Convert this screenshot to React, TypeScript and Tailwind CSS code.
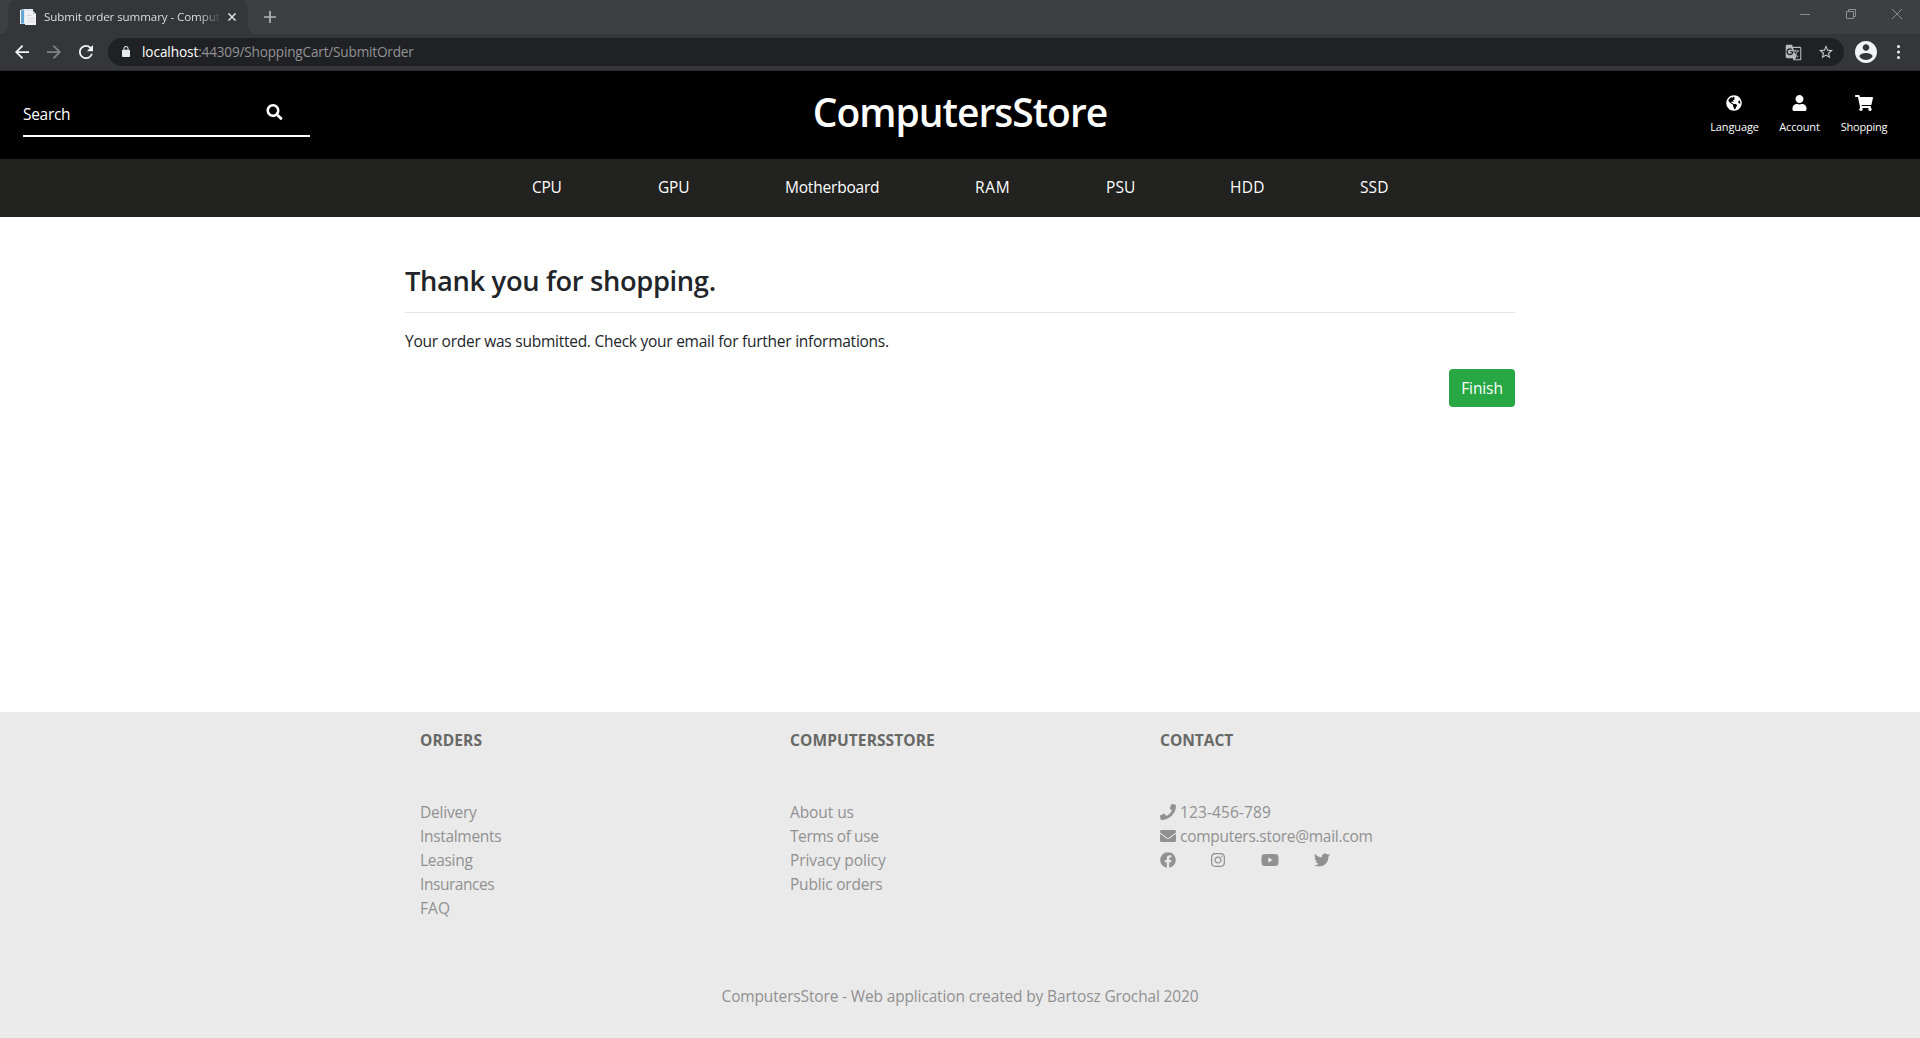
import React from "react";
import {
  FaEnvelope,
  FaFacebook,
  FaGlobeAmericas,
  FaInstagram,
  FaPhone,
  FaSearch,
  FaShoppingCart,
  FaTwitter,
  FaUser,
  FaYoutube,
} from "react-icons/fa";
import { MdGTranslate } from "react-icons/md";

type Item = { label: string; className: string };

const categories: Item[] = [
  { label: "CPU", className: "w-[29px] mr-[97px] tracking-[-0.3px]" },
  { label: "GPU", className: "w-[31px] mr-[96px] tracking-[-0.2px]" },
  { label: "Motherboard", className: "w-[94px] mr-[96px] tracking-[-0.2px]" },
  { label: "RAM", className: "w-[34px] mr-[97px] tracking-[0.7px]" },
  { label: "PSU", className: "w-[29px] mr-[95px] tracking-[0.1px]" },
  { label: "HDD", className: "w-[34px] mr-[96px] tracking-[0.3px]" },
  { label: "SSD", className: "w-[29px] tracking-[0.1px]" },
];

const orders: Item[] = [
  { label: "Delivery", className: "tracking-[-0.22px]" },
  { label: "Instalments", className: "tracking-[-0.32px]" },
  { label: "Leasing", className: "tracking-[-0.3px]" },
  { label: "Insurances", className: "tracking-[-0.44px]" },
  { label: "FAQ", className: "tracking-[0.1px]" },
];

const store: Item[] = [
  { label: "About us", className: "tracking-[-0.08px]" },
  { label: "Terms of use", className: "tracking-[-0.42px]" },
  { label: "Privacy policy", className: "tracking-[-0.1px]" },
  { label: "Public orders", className: "tracking-[-0.2px]" },
];

function TabStrip() {
  return (
    <div className="flex h-[34px] items-stretch bg-[#3c4043] pl-2">
      <div className="relative flex w-[240px] items-center rounded-t-lg bg-[#35363a] pl-3">
        <svg className="absolute bottom-0 -left-2 h-2 w-2 text-[#35363a]" viewBox="0 0 8 8">
          <path d="M8 0v8H0a8 8 0 0 0 8-8z" fill="currentColor" />
        </svg>
        <svg className="absolute -right-2 bottom-0 h-2 w-2 text-[#35363a]" viewBox="0 0 8 8">
          <path d="M0 0v8h8a8 8 0 0 1-8-8z" fill="currentColor" />
        </svg>
        <svg className="h-4 w-4 shrink-0" viewBox="0 0 16 16">
          <path d="M0 1l4-1h9v15H0z" fill="#dce9f3" />
          <path d="M0 1.200l1-.2v13.500H0z" fill="#f5f8fa" />
          <path d="M1 1.500l3-.5v13.500H1z" fill="#62a5d4" />
          <path d="M5 2h8l3 3v11H5z" fill="#f1f1f3" />
          <path d="M13 2l3 3h-3z" fill="#c3c8cc" />
          <path d="M7 6.500h5M8 9.500h7M8 12h7" stroke="#d4d7dd" strokeWidth="1" />
        </svg>
        <div className="ml-2 w-[176px] whitespace-nowrap text-[11.6px] leading-5 tracking-[-0.1px] text-[#dadce0] [mask-image:linear-gradient(to_right,black_155px,transparent_178px)]">
          Submit order summary - Comput
        </div>
        <svg className="ml-2 h-2 w-2 text-[#dfe1e5]" viewBox="0 0 8 8">
          <path d="M.4.4l7.200 7.200M7.600.4L.4 7.600" stroke="currentColor" strokeWidth="1.500" />
        </svg>
      </div>
      <svg className="mt-[11px] ml-4 h-3 w-3 text-[#b4b6b8]" viewBox="0 0 12 12">
        <path d="M6 0v12M0 6h12" stroke="currentColor" strokeWidth="1.700" />
      </svg>
      <div className="mt-[9px] mr-[18px] ml-auto flex gap-9 text-[#8c8e90]">
        <svg className="h-[10px] w-[10px]" viewBox="0 0 10 10">
          <path d="M0 5.500h10" stroke="currentColor" />
        </svg>
        <svg className="h-[10px] w-[10px]" viewBox="0 0 10 10">
          <path d="M.5 2.500h7v7h-7zM2.500 2.500v-2h7v7h-2" fill="none" stroke="currentColor" />
        </svg>
        <svg className="h-[10px] w-[10px]" viewBox="0 0 10 10">
          <path d="M0 0l10 10M10 0L0 10" stroke="currentColor" />
        </svg>
      </div>
    </div>
  );
}

function Toolbar() {
  return (
    <div className="flex h-[37px] items-center border-b border-[#28292b] bg-[#35363a] pl-[15px]">
      <svg className="h-[14px] w-[14px] text-[#f1f3f4]" viewBox="4 4 16 16" fill="currentColor">
        <path d="M20 11H7.830l5.590-5.590L12 4l-8 8 8 8 1.410-1.410L7.830 13H20v-2z" />
      </svg>
      <svg className="ml-[18px] h-[14px] w-[14px] text-[#828386]" viewBox="4 4 16 16" fill="currentColor">
        <path d="M12 4l-1.410 1.410L16.170 11H4v2h12.170l-5.580 5.590L12 20l8-8z" />
      </svg>
      <svg className="ml-[18px] h-[14px] w-[14px] text-[#f1f3f4]" viewBox="4 4 16 16" fill="currentColor">
        <path d="M17.650 6.350A7.958 7.958 0 0 0 12 4a8 8 0 1 0 7.730 10h-2.080A5.990 5.990 0 0 1 12 18a6 6 0 1 1 0-12c1.660 0 3.140.69 4.220 1.780L13 11h7V4l-2.350 2.350z" />
      </svg>
      <div className="ml-[15px] flex h-7 w-[1736px] items-center rounded-full bg-[#202124] pr-[11px] pl-[14px]">
        <svg className="mb-px h-[11px] w-2 text-[#e8eaed]" viewBox="4 1 16 21" preserveAspectRatio="none" fill="currentColor">
          <path d="M18 8h-1V6c0-2.760-2.240-5-5-5S7 3.240 7 6v2H6c-1.100 0-2 .9-2 2v10c0 1.100.9 2 2 2h12c1.100 0 2-.9 2-2V10c0-1.100-.9-2-2-2zM15.100 8H8.900V6c0-1.710 1.390-3.100 3.100-3.100s3.100 1.390 3.100 3.100v2z" />
        </svg>
        <div className="ml-3 whitespace-nowrap text-[13.6px] leading-5 tracking-[-0.19px] text-[#909295]">
          <span className="tracking-[-0.08px] text-white">localhost</span>:44309/ShoppingCart/SubmitOrder
        </div>
        <MdGTranslate className="ml-auto h-[17px] w-[17px] text-[#b9babc]" />
        <svg className="ml-[17px] h-[14px] w-[14px] text-[#c6c8ca]" viewBox="2 2 20 20" fill="currentColor">
          <path d="M22 9.240l-7.190-.62L12 2 9.190 8.630 2 9.240l5.460 4.730L5.820 21 12 17.270 18.180 21l-1.630-7.030L22 9.240zM12 15.400l-3.760 2.270 1-4.280-3.320-2.880 4.380-.38L12 6.100l1.710 4.040 4.380.38-3.320 2.880 1 4.280L12 15.400z" />
        </svg>
      </div>
      <svg className="ml-[11px] h-[22px] w-[22px] text-[#f1f3f4]" viewBox="2 2 20 20" fill="currentColor">
        <path d="M12 2C6.480 2 2 6.480 2 12s4.480 10 10 10 10-4.480 10-10S17.520 2 12 2zm0 3c1.660 0 3 1.340 3 3s-1.340 3-3 3-3-1.340-3-3 1.340-3 3-3zm0 14.200c-2.500 0-4.710-1.280-6-3.220.03-1.990 4-3.080 6-3.080 1.990 0 5.970 1.090 6 3.080-1.290 1.940-3.500 3.220-6 3.220z" />
      </svg>
      <svg className="ml-5 h-[14px] w-[3px] text-[#f1f3f4]" viewBox="0 0 3 14" fill="currentColor">
        <circle cx="1.500" cy="1.600" r="1.500" />
        <circle cx="1.500" cy="7" r="1.500" />
        <circle cx="1.500" cy="12.400" r="1.500" />
      </svg>
    </div>
  );
}

function Header() {
  return (
    <header className="grid h-[88px] grid-cols-3 bg-black text-white">
      <div className="ml-[23px] flex h-[66px] w-[287px] items-center border-b-2 border-white pt-5">
        <span className="w-[243px] pt-px text-[15.5px] leading-6 tracking-[-0.3px]">Search</span>
        <FaSearch className="mb-[3px] h-4 w-[17px]" />
      </div>
      <h1 className="mt-[11px] justify-self-center text-[39px] leading-[60px] font-semibold tracking-[-1px] whitespace-nowrap">
        ComputersStore
      </h1>
      <div className="mt-6 mr-8 flex justify-end text-[11px] leading-4">
        <div className="mr-5 flex w-[49px] flex-col items-center">
          <FaGlobeAmericas className="mr-px h-4 w-4" />
          <span className="mt-2 tracking-[-0.12px]">Language</span>
        </div>
        <div className="mr-5 flex w-[41px] flex-col items-center">
          <FaUser className="h-4 w-[15px]" />
          <span className="mt-2 tracking-[-0.15px]">Account</span>
        </div>
        <div className="flex w-12 flex-col items-center">
          <FaShoppingCart className="h-4 w-[18px]" />
          <span className="mt-2 tracking-[-0.25px]">Shopping</span>
        </div>
      </div>
    </header>
  );
}

function FooterList({ title, items, titleClass }: { title: string; items: Item[]; titleClass: string }) {
  return (
    <div className="w-[370px] pl-[15px]">
      <h2 className={`font-bold text-[#676865] ${titleClass}`}>{title}</h2>
      <ul className="mt-12">
        {items.map((item) => (
          <li key={item.label} className={item.className}>
            {item.label}
          </li>
        ))}
      </ul>
    </div>
  );
}

function Footer() {
  return (
    <footer className="h-[326px] bg-[#eaeaea] pt-4 text-[#919191]">
      <div className="mx-auto flex h-[232px] w-[1110px]">
        <FooterList title="ORDERS" items={orders} titleClass="tracking-[0.1px]" />
        <FooterList title="COMPUTERSSTORE" items={store} titleClass="tracking-[0.1px]" />
        <div className="w-[370px] pl-[15px]">
          <h2 className="font-bold text-[#676865]">CONTACT</h2>
          <div className="mt-12 flex h-6">
            <FaPhone className="mt-1 h-4 w-4" />
            <span className="ml-1 tracking-[0.1px]">123-456-789</span>
          </div>
          <div className="flex h-6">
            <FaEnvelope className="mt-1 h-4 w-4" />
            <span className="ml-1 tracking-[-0.28px]">computers.store@mail.com</span>
          </div>
          <div className="flex h-6 pt-1">
            <FaFacebook className="h-4 w-4" />
            <FaInstagram className="ml-[34px] h-4 w-4" />
            <FaYoutube className="ml-[35px] h-4 w-[18px]" />
            <FaTwitter className="ml-[35px] h-4 w-4" />
          </div>
        </div>
      </div>
      <p className="mt-6 text-center tracking-[-0.15px]">
        ComputersStore - Web application created by Bartosz Grochal 2020
      </p>
    </footer>
  );
}

export default function App() {
  return (
    <div className="flex h-[1038px] w-[1920px] flex-col overflow-hidden bg-white font-['Open_Sans','Noto_Sans',sans-serif] text-[15.5px] leading-6">
      <TabStrip />
      <Toolbar />
      <Header />
      <nav className="flex h-[58px] bg-[#222220] pt-4 pl-[532px] whitespace-nowrap text-white">
        {categories.map((c) => (
          <a key={c.label} className={c.className}>
            {c.label}
          </a>
        ))}
      </nav>
      <main className="mx-auto flex w-[1110px] flex-1 flex-col pt-12 text-[#212529]">
        <h2 className="h-12 border-b border-[#e5e5e5] text-[27.3px] leading-[31px] font-semibold tracking-[-0.34px]">
          Thank you for shopping.
        </h2>
        <p className="mt-4 tracking-[-0.255px]">
          Your order was submitted. Check your email for further informations.
        </p>
        <button className="mt-4 flex h-[38px] w-[66px] items-center justify-center self-end rounded bg-[#28a745] tracking-[-0.1px] text-white">
          Finish
        </button>
      </main>
      <Footer />
    </div>
  );
}
